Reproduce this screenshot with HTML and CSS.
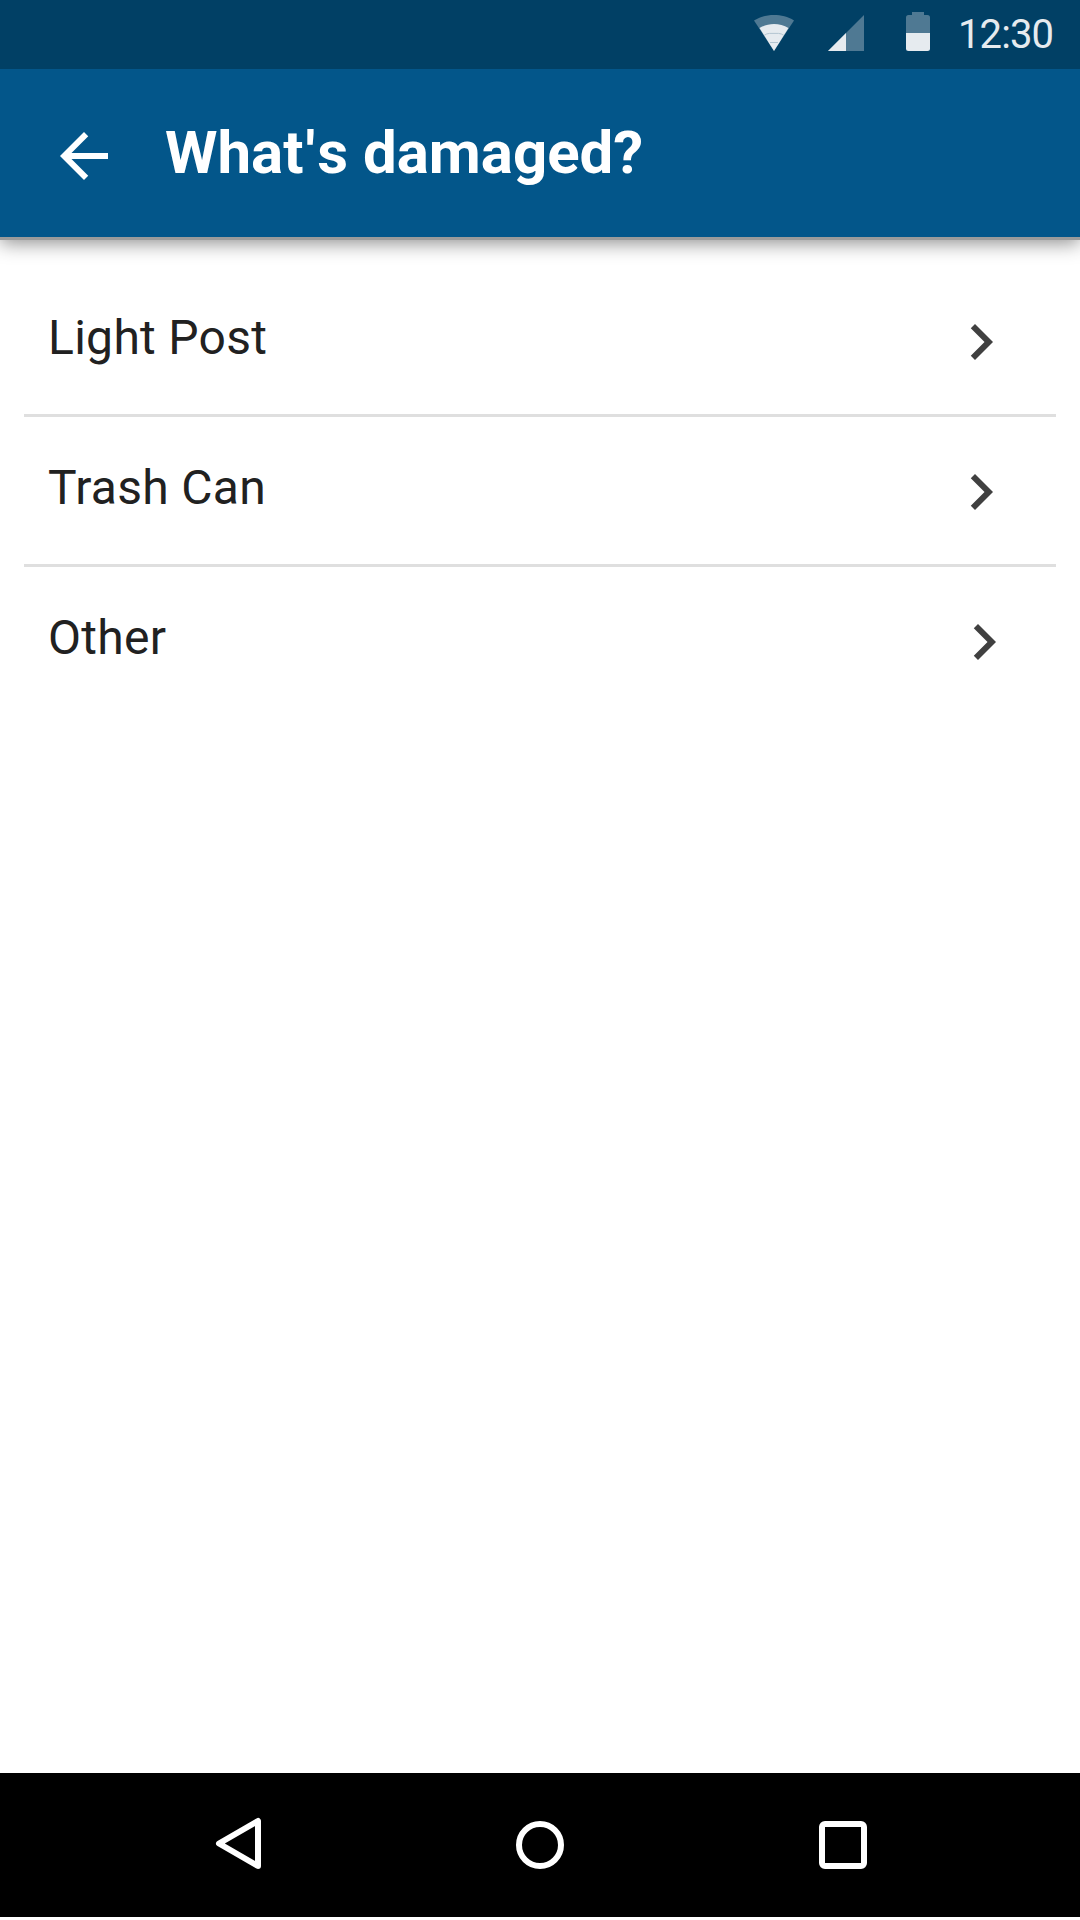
FILE: index.html
```html
<!DOCTYPE html>
<html lang="en">
<head>
<meta charset="utf-8">
<title>What's damaged?</title>
<link rel="stylesheet" href="styles.css">
</head>
<body>
<div class="screen">
  <div class="status-bar">
    <svg class="wifi" width="42" height="42" viewBox="0 0 42 42" aria-hidden="true">
      <path class="dim" d="M21 40 1 9.500C7 5.500 14 4 21 4s14 1.500 20 5.500z"/>
      <path class="lit" d="M21 40 6.500 17C11 14.300 16 13 21 13s10 1.300 14.500 4z"/>
      <path class="wave" d="M11 24.500Q13.500 22.500 16.500 22.400H25.500Q28.500 22.500 31 24.500M17 31.500H25"/>
    </svg>
    <svg class="signal" width="36" height="42" viewBox="0 0 36 42" aria-hidden="true">
      <path class="dim" d="M0 40 36 4v36z"/>
      <path class="lit" d="M0 40 18 22v18z"/>
    </svg>
    <svg class="battery" width="24" height="42" viewBox="0 0 24 42" aria-hidden="true">
      <path class="dim" d="M0 22V6.500Q0 4 2.500 4H6V1h12v3h3.500Q24 4 24 6.500V22z"/>
      <path class="lit" d="M0 22h24v15.500q0 2.500-2.500 2.500h-19Q0 40 0 37.500z"/>
    </svg>
    <span class="time">12:30</span>
  </div>
  <header class="app-bar">
    <svg class="back" width="72" height="72" viewBox="0 0 24 24" aria-label="Back">
      <path d="M20 11H7.830l5.590-5.590L12 4l-8 8 8 8 1.410-1.410L7.830 13H20v-2z"/>
    </svg>
    <h1 class="title">Wha<span class="loose">t'</span>s damaged?</h1>
  </header>
  <main class="content">
    <ul class="list">
      <li class="row">
        <span class="label">Light Post</span>
        <svg class="chevron" width="72" height="72" viewBox="0 0 24 24" aria-hidden="true"><path d="M8.590 16.590 13.170 12 8.590 7.410 10 6l6 6-6 6z"/></svg>
      </li>
      <li class="row">
        <span class="label">Trash Can</span>
        <svg class="chevron" width="72" height="72" viewBox="0 0 24 24" aria-hidden="true"><path d="M8.590 16.590 13.170 12 8.590 7.410 10 6l6 6-6 6z"/></svg>
      </li>
      <li class="row">
        <span class="label">Other</span>
        <svg class="chevron" width="72" height="72" viewBox="0 0 24 24" aria-hidden="true"><path d="M8.590 16.590 13.170 12 8.590 7.410 10 6l6 6-6 6z"/></svg>
      </li>
    </ul>
  </main>
  <nav class="nav-bar">
    <svg width="54" height="54" viewBox="0 0 54 54" aria-label="Back"><path d="M48 5v45L9 27.500z"/></svg>
    <svg width="54" height="54" viewBox="0 0 54 54" aria-label="Home"><circle cx="27" cy="29" r="21"/></svg>
    <svg width="54" height="54" viewBox="0 0 54 54" aria-label="Recent apps"><rect x="6" y="8" width="42" height="42" rx="3"/></svg>
  </nav>
</div>
</body>
</html>
```
FILE: styles.css
```css
* { box-sizing: border-box; }

body {
  margin: 0;
  background: #fff;
  font-family: Roboto, "Noto Sans", sans-serif;
}

.screen {
  display: flex;
  flex-direction: column;
  width: 1080px;
  height: 1920px;
  padding-bottom: 3px;
  overflow: hidden;
  background: #fff;
}

svg { display: block; flex: none; }

.status-bar {
  position: relative;
  z-index: 1;
  display: flex;
  align-items: flex-start;
  height: 69px;
  padding: 11px 0 0 753px;
  background: #014065;
}
.signal { margin-left: 33px; }
.battery { margin-left: 42px; }
.dim { fill: #4f7993; }
.lit { fill: #e6ebef; }
.wave { fill: none; stroke: #b3c5d0; stroke-width: 1; }
.time {
  margin-left: 28px;
  font-size: 40px;
  line-height: 48px;
  letter-spacing: -0.9px;
  color: #e6ebef;
}

.app-bar {
  display: flex;
  align-items: flex-start;
  height: 168px;
  padding-left: 48px;
  background: #03568a;
  box-shadow: 0 3px 0 #9b9b9b, 0 6px 18px rgba(0, 0, 0, 0.45);
}
.back { margin-top: 51px; fill: #fff; }
.title {
  margin: 0 0 0 45px;
  font-size: 60px;
  font-weight: 700;
  font-kerning: none;
  line-height: 168px;
  color: #fff;
}
.loose { letter-spacing: 2px; }

.content { flex: 1; padding: 30px 24px 0; }
.list { margin: 0; padding: 0; list-style: none; }
.row {
  display: flex;
  align-items: flex-start;
  justify-content: space-between;
  height: 150px;
  padding: 0 39px 0 24px;
  border-bottom: 3px solid #dfdfdf;
}
.row:last-child { padding-right: 36px; border-bottom: 0; }
.label {
  font-size: 48px;
  line-height: 141px;
  letter-spacing: 0.3px;
  color: #212121;
}
.chevron { margin-top: 39px; fill: #404040; }

.nav-bar {
  display: flex;
  justify-content: space-between;
  height: 144px;
  padding: 43px 210px 0;
  background: #000;
}
.nav-bar svg {
  fill: none;
  stroke: #fff;
  stroke-width: 6;
  stroke-linejoin: round;
}
```
